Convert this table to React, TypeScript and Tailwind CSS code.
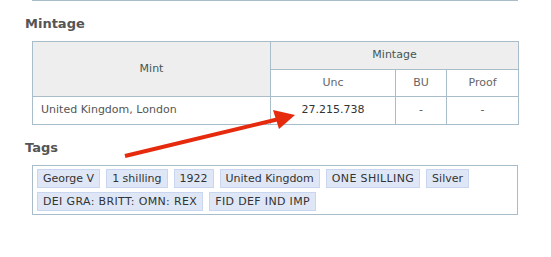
import React from "react";

const tags = [
  "George V",
  "1 shilling",
  "1922",
  "United Kingdom",
  "ONE SHILLING",
  "Silver",
  "DEI GRA: BRITT: OMN: REX",
  "FID DEF IND IMP",
];

const cell = "border border-[#a9bcc9] text-center align-middle";

export default function App() {
  return (
    <div
      className="relative w-[551px] h-[257px] bg-white text-[11px] overflow-hidden"
      style={{ fontFamily: '"DejaVu Sans", Verdana, sans-serif' }}
    >
      {/* bottom edge of the previous block */}
      <div className="ml-[32px] w-[486px] h-px bg-[#a9bcc9]" />

      <h2 className="ml-[25px] mt-[15px] mb-[9px] text-[13px] leading-[16px] font-bold text-[#555]">
        Mintage
      </h2>

      <table className="ml-[32px] w-[486px] border-collapse table-fixed">
        <colgroup>
          <col className="w-[238px]" />
          <col className="w-[125px]" />
          <col className="w-[51px]" />
          <col className="w-[72px]" />
        </colgroup>
        <thead>
          <tr className="h-[28px]">
            <th rowSpan={2} className={`${cell} font-normal bg-[#eeeeee] text-[#3f5757]`}>
              Mint
            </th>
            <th colSpan={3} className={`${cell} font-normal bg-[#eeeeee] text-[#3f5757]`}>
              Mintage
            </th>
          </tr>
          <tr className="h-[27px]">
            <th className={`${cell} font-normal text-[#666]`}>Unc</th>
            <th className={`${cell} font-normal text-[#666]`}>BU</th>
            <th className={`${cell} font-normal text-[#666]`}>Proof</th>
          </tr>
        </thead>
        <tbody>
          <tr className="h-[28px]">
            <td className="border border-[#a9bcc9] text-left pl-[8px] text-[#555]">
              United Kingdom, London
            </td>
            <td className={`${cell} text-[#333]`}>27.215.738</td>
            <td className={`${cell} text-[#555]`}>-</td>
            <td className={`${cell} text-[#555]`}>-</td>
          </tr>
        </tbody>
      </table>

      <h2 className="ml-[25px] mt-[15px] mb-[9px] text-[13px] leading-[16px] font-bold text-[#555]">
        Tags
      </h2>

      <div className="ml-[32px] w-[486px] border border-[#a9bcc9] pt-[3px] pb-[3px] pl-[4px] pr-[4px] flex flex-wrap gap-x-[6px] gap-y-[4px]">
        {tags.map((tag) => {
          // uppercase legends render a bit wider in the original font
          const caps = tag === tag.toUpperCase() && /[A-Z]/.test(tag);
          return (
            <span
              key={tag}
              className={`h-[19px] px-[5px] flex items-center border border-[#c8d7ef] bg-[#dfe7f7] text-[#333] leading-none ${
                caps ? "tracking-[0.35px]" : ""
              }`}
            >
              {tag}
            </span>
          );
        })}
      </div>

      {/* red annotation arrow */}
      <svg
        className="absolute left-0 top-0 pointer-events-none"
        width="551"
        height="257"
        viewBox="0 0 551 257"
      >
        <line x1="125" y1="156" x2="279" y2="119" stroke="#e62a0d" strokeWidth="4" />
        <polygon points="295,115 273,110 279,129" fill="#e62a0d" />
      </svg>
    </div>
  );
}
